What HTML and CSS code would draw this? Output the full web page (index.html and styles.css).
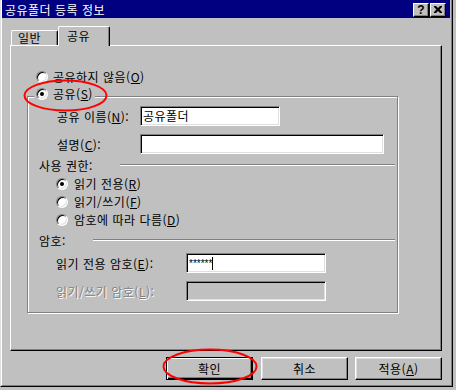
FILE: index.html
```html
<!DOCTYPE html>
<html lang="ko">
<head>
    <meta charset="UTF-8">
    <title>공유폴더 등록 정보</title>
    <link rel="stylesheet" href="styles.css">
</head>
<body>
    <div class="window">
        <div class="frame">
            <div class="titlebar">
                <span class="title">공유폴더 등록 정보</span>
                <div class="caption-btns">
                    <span class="cap-btn help">?</span>
                    <span class="cap-btn close">
                        <svg width="8" height="7" viewBox="0 0 8 7">
                            <path d="M0 0h2l2 2 2-2h2v1L5.5 3.5 8 6v1H6L4 5 2 7H0V6l2.5-2.5L0 1z" fill="#000"/>
                        </svg>
                    </span>
                </div>
            </div>

            <div class="tabs">
                <div class="tab">일반</div>
                <div class="tab active">공유</div>
            </div>

            <div class="panel">
                <div class="radio-row top-radio">
                    <span class="radio"></span>
                    <span class="text">공유하지 않음(<u>O</u>)</span>
                </div>

                <fieldset class="group">
                    <legend>
                        <span class="radio-row legend-row">
                            <span class="radio checked"></span>
                            <span class="text">공유(<u>S</u>)</span>
                        </span>
                    </legend>

                    <div class="field-row name-row">
                        <span class="label label-name">공유 이름(<u>N</u>):</span>
                        <span class="field field-short">공유폴더</span>
                    </div>
                    <div class="field-row desc-row">
                        <span class="label label-name">설명(<u>C</u>):</span>
                        <span class="field field-long"></span>
                    </div>

                    <div class="section perm-head">
                        <span class="section-label perm-label">사용 권한:</span>
                        <span class="etched"></span>
                    </div>
                    <div class="radio-row perm first">
                        <span class="radio checked"></span>
                        <span class="text">읽기 전용(<u>R</u>)</span>
                    </div>
                    <div class="radio-row perm">
                        <span class="radio"></span>
                        <span class="text">읽기/쓰기(<u>F</u>)</span>
                    </div>
                    <div class="radio-row perm">
                        <span class="radio"></span>
                        <span class="text">암호에 따라 다름(<u>D</u>)</span>
                    </div>

                    <div class="section pwd-head">
                        <span class="section-label pwd-label">암호:</span>
                        <span class="etched"></span>
                    </div>
                    <div class="field-row ro-row">
                        <span class="label label-pwd">읽기 전용 암호(<u>E</u>):</span>
                        <span class="field field-short"><span class="stars">******</span><span class="caret"></span></span>
                    </div>
                    <div class="field-row rw-row">
                        <span class="label label-pwd disabled">읽기/쓰기 암호(<u>L</u>):</span>
                        <span class="field field-short off"></span>
                    </div>
                </fieldset>
            </div>

            <div class="buttons">
                <span class="btn default">확인</span>
                <span class="btn">취소</span>
                <span class="btn">적용(<u>A</u>)</span>
            </div>
        </div>
    </div>

    <!-- red marks drawn over the dialog -->
    <svg class="marks" width="456" height="390" viewBox="0 0 456 390">
        <ellipse cx="65.5" cy="95.5" rx="41" ry="15" fill="none" stroke="#f00" stroke-width="2"/>
        <ellipse cx="210" cy="366.5" rx="46.5" ry="17" fill="none" stroke="#f00" stroke-width="2"/>
    </svg>
</body>
</html>
```

FILE: styles.css
```css
* {
    box-sizing: border-box;
}
body {
    margin: 0;
    width: 456px;
    height: 390px;
    overflow: hidden;
    position: relative;
    background: #c0c0c0;
    font-family: "Noto Sans CJK KR", "Liberation Sans", sans-serif;
    font-size: 12px;
    letter-spacing: 0.5px;
    line-height: 15px;
    color: #000;
}
u {
    text-decoration: underline;
    text-underline-offset: 1px;
}
.window {
    width: 453px;
    height: 387px;
    border-left: 1px solid #dfdfdf;
    border-right: 1px solid #000;
    border-bottom: 1px solid #000;
}
.frame {
    height: 100%;
    border-left: 1px solid #fff;
    border-right: 1px solid #808080;
    border-bottom: 1px solid #808080;
    padding-right: 1px;
}
.titlebar {
    height: 18px;
    background: #000080;
    color: #fff;
    display: flex;
    align-items: center;
    justify-content: space-between;
    padding: 1px 4px 0 3px;
}
.title {
    line-height: 16px;
}
.caption-btns {
    display: flex;
}
.cap-btn {
    width: 16px;
    height: 14px;
    background: #c0c0c0;
    border-top: 1px solid #fff;
    border-left: 1px solid #fff;
    border-right: 1px solid #000;
    border-bottom: 1px solid #000;
    box-shadow: inset -1px -1px #808080;
    display: flex;
    align-items: center;
    justify-content: center;
    color: #000;
}
.cap-btn.help {
    font-family: "Liberation Sans", sans-serif;
    font-weight: bold;
    font-size: 12px;
    line-height: 12px;
    letter-spacing: 0;
}
.cap-btn.close {
    margin-left: 1px;
}
.tabs {
    display: flex;
    align-items: flex-end;
    height: 27px;
    margin-left: 9px;
}
.tab {
    width: 47px;
    height: 15px;
    border-top: 1px solid #fff;
    border-left: 1px solid #fff;
    border-right: 1px solid #000;
    border-radius: 2px 2px 0 0;
    box-shadow: inset -1px 0 #808080;
    padding-left: 6px;
    line-height: 14px;
}
.tab.active {
    width: 52px;
    height: 20px;
    margin-bottom: -1px;
    position: relative;
    z-index: 1;
    background: #c0c0c0;
    padding-left: 8px;
    line-height: 17px;
}
.panel {
    height: 306px;
    margin: 0 8px;
    border-top: 1px solid #fff;
    border-left: 1px solid #fff;
    border-right: 1px solid #000;
    border-bottom: 1px solid #000;
    box-shadow: inset -1px -1px #808080;
    padding-top: 23px;
}
.radio-row {
    display: flex;
    align-items: center;
    height: 16px;
}
.text {
    line-height: 14px;
}
.radio {
    width: 12px;
    height: 12px;
    flex: none;
    border-radius: 50%;
    background: #fff;
    border: 1px solid;
    border-color: #808080 #fff #fff #808080;
    box-shadow: inset 1px 1px #000, inset -1px -1px #dfdfdf;
    margin-right: 5px;
    position: relative;
}
.radio.checked::after {
    content: "";
    position: absolute;
    left: 3px;
    top: 3px;
    width: 4px;
    height: 4px;
    border-radius: 50%;
    background: #000;
}
.top-radio {
    margin-left: 25px;
}
.group {
    margin: 3px 0 0 16px;
    width: 371px;
    min-width: 0;
    border: 1px solid #808080;
    box-shadow: 1px 1px #fff, inset 1px 1px #fff;
    padding: 0 0 11px 6px;
}
.group legend {
    padding: 0 2px 5px;
    background: #c0c0c0;
    line-height: 12px;
}
.legend-row {
    height: 12px;
}
.legend-row .text {
    line-height: 12px;
}
.field-row {
    display: flex;
    align-items: center;
    height: 20px;
}
.name-row {
    margin-top: 1px;
}
.desc-row {
    margin-top: 8px;
}
.ro-row {
    margin-top: 5px;
}
.rw-row {
    margin-top: 8px;
}
.label {
    flex: none;
    white-space: nowrap;
}
.label-name {
    margin-left: 23px;
    width: 83px;
}
.label-pwd {
    margin-left: 22px;
    width: 130px;
}
.disabled {
    color: #808080;
    text-shadow: 1px 1px 0 #fff;
}
.field {
    height: 20px;
    background: #fff;
    border: 1px solid;
    border-color: #808080 #fff #fff #808080;
    box-shadow: inset 1px 1px #000, inset -1px -1px #dfdfdf;
    padding: 0 2px;
    line-height: 16px;
    display: flex;
    align-items: center;
}
.field-short {
    width: 140px;
}
.field-long {
    width: 244px;
}
.field.off {
    background: #c0c0c0;
}
.stars {
    font-family: "Liberation Sans", sans-serif;
    font-size: 10px;
    line-height: 10px;
    letter-spacing: 0;
    margin-top: 1px;
}
.caret {
    width: 1px;
    height: 13px;
    background: #000;
}
.section {
    display: flex;
    align-items: center;
    height: 16px;
    margin-right: 2px;
}
.perm-head {
    margin-top: 3px;
}
.pwd-head {
    margin-top: 3px;
}
.section-label {
    flex: none;
    margin-left: 5px;
}
.perm-label {
    width: 81px;
}
.pwd-label {
    width: 54px;
}
.etched {
    flex: 1;
    height: 2px;
    border-top: 1px solid #808080;
    border-bottom: 1px solid #fff;
}
.perm {
    height: 18px;
    margin-left: 22px;
}
.perm .radio {
    margin-right: 6px;
}
.perm.first {
    margin-top: 2px;
}
.buttons {
    display: flex;
    justify-content: flex-end;
    gap: 7px;
    margin-top: 6px;
    padding-right: 8px;
}
.btn {
    width: 87px;
    height: 23px;
    display: flex;
    align-items: center;
    justify-content: center;
    border-top: 1px solid #fff;
    border-left: 1px solid #fff;
    border-right: 1px solid #000;
    border-bottom: 1px solid #000;
    box-shadow: inset -1px -1px #808080, inset 1px 1px #dfdfdf;
}
.btn.default {
    margin-right: 1px;
    border: 1px solid #000;
    box-shadow: inset 1px 1px #fff, inset -1px -1px #000, inset -2px -2px #808080;
}
.marks {
    position: absolute;
    left: 0;
    top: 0;
    pointer-events: none;
}
```
